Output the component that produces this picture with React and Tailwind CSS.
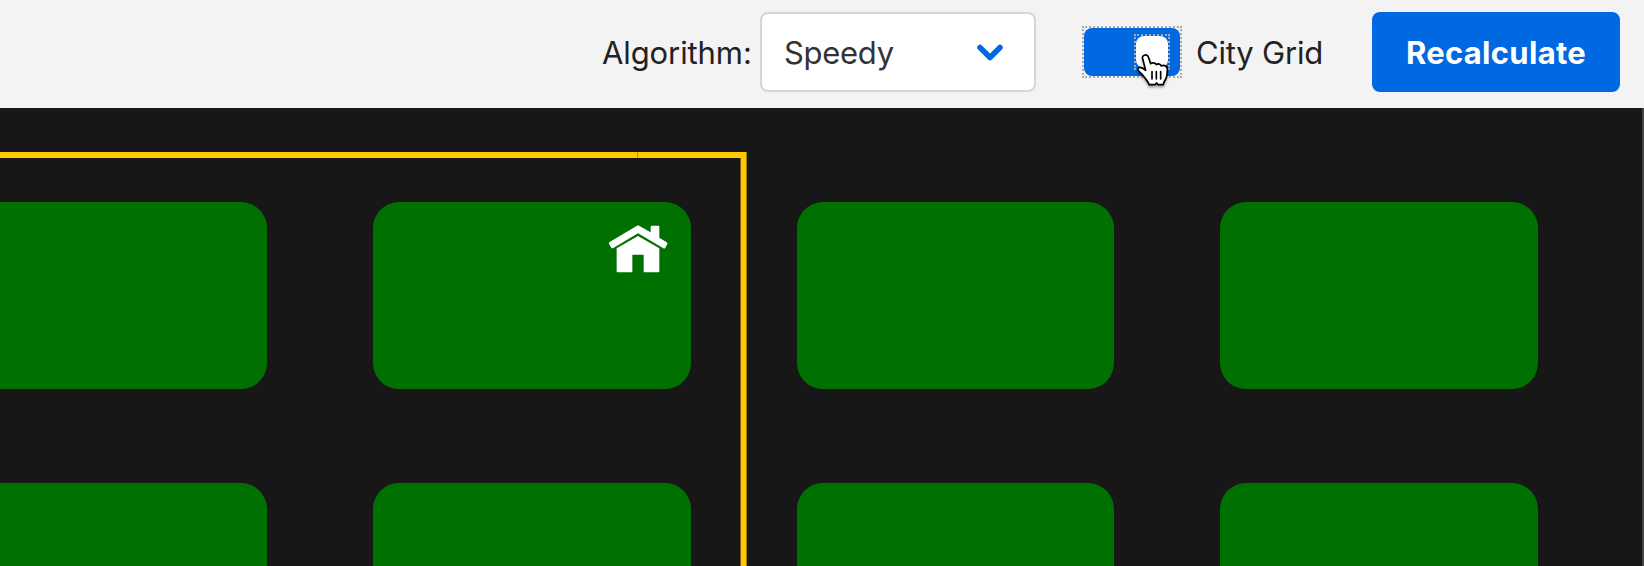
const BLOCKS = [0, 1, 2, 3, 4, 5, 6, 7];

function HouseIcon() {
  return (
    <svg className="absolute top-[22px] right-[23px] h-[49px] w-[60px]" viewBox="0 0 180 147" fill="#fff">
      <path d="M87 5q3-2 6 0L128 25V8q0-3 3-3h20q3 0 3 3v33l22 14q4 2 2 5l-6 11q-2 4-6 2L90 28 16 72q-4 2-6-1L3 60q-2-4 2-6z" />
      <path d="M90 36l64 37v69q0 3-3 3h-44V92H73v53H29q-3 0-3-3V73z" />
    </svg>
  );
}

function PointerCursor() {
  return (
    <svg className="absolute top-[18px] left-[46px] h-[46px] w-[46px] drop-shadow-[0_2px_1px_rgba(0,0,0,0.35)]" viewBox="0 0 138 138" fill="#fff" stroke="#000" strokeWidth="5" strokeLinejoin="round" strokeLinecap="round">
      <path d="M43 28c6-3 11 0 13 7l6 18c5-4 14-3 17 3 5-4 13-2 15 4 8-4 18 0 18 9 0 14 0 22-5 30-4 6-6 10-7 17H84l-4-5-5 5H57c-2-9-7-13-12-20-5-7-11-14-18-20-4-4-4-9-1-11 7-4 13 1 21 8L38 38c-2-5 0-8 5-10z" />
      <path d="M66 77v22M79 77v22M92 77v22" fill="none" />
    </svg>
  );
}

export default function App() {
  return (
    <div className="flex h-[566px] w-full flex-col overflow-hidden bg-[#171717] font-['Inter',sans-serif] text-[31px] leading-[40px] text-[#222]">
      <header className="flex h-[108px] shrink-0 items-start justify-end bg-[#f3f3f3] pt-3 pr-6">
        <label className="flex h-20 items-center">
          <span className="mr-[10px] w-[148px] pt-[2px] whitespace-nowrap tracking-[-0.100px]">Algorithm:</span>
          <span className="flex h-20 w-[276px] items-center justify-between rounded-lg border-2 border-[#d5d5d5] bg-white pr-[31px] pl-[22px] text-[#333]">
            <span className="pt-[2px] tracking-[-0.3px]">Speedy</span>
            <svg className="mt-px h-[18px] w-[26px]" viewBox="0 0 26 18" fill="none" stroke="#0068e1" strokeWidth="5.500" strokeLinecap="round" strokeLinejoin="round">
              <path d="M3 3.500l10 10 10-10" />
            </svg>
          </span>
        </label>
        <div className="ml-[46px] flex h-20 items-center">
          <div className="relative flex h-[52px] w-[100px] items-start justify-end border-2 border-dotted border-[#aaa] pt-[6px] pr-[10px]">
            <div className="absolute inset-0 rounded-lg bg-[#0068e1]" />
            <div className="relative h-9 w-9 border-2 border-dotted border-[#aaa]">
              <div className="h-8 w-8 rounded-lg bg-white" />
            </div>
            <PointerCursor />
          </div>
          <span className="ml-[14px] w-[176px] pt-[2px] whitespace-nowrap tracking-[-0.200px]">City Grid</span>
        </div>
        <button className="h-20 w-[248px] rounded-lg bg-[#0068e1] pt-[2px] font-bold tracking-[0.300px] text-white">Recalculate</button>
      </header>
      <main className="relative h-[458px] overflow-hidden border-r-2 border-[#444]">
        <div className="-ml-[50.600px] grid w-[1589px] grid-cols-[repeat(4,317.750px)] gap-x-[105.900px] gap-y-[94px] pt-[94px]">
          {BLOCKS.map((i) => (
            <div key={i} className="relative h-[187.300px] rounded-[26px] bg-[#007000]">
              {i === 1 && <HouseIcon />}
            </div>
          ))}
        </div>
        <svg className="absolute top-0 left-0 h-[458px] w-[760px]" viewBox="0 0 760 458" fill="none">
          <path d="M-10 47H743.600V470" stroke="#ffc800" strokeWidth="6" />
          <path d="M637.500 44v6" stroke="#b8920c" strokeWidth="1" />
        </svg>
      </main>
    </div>
  );
}
